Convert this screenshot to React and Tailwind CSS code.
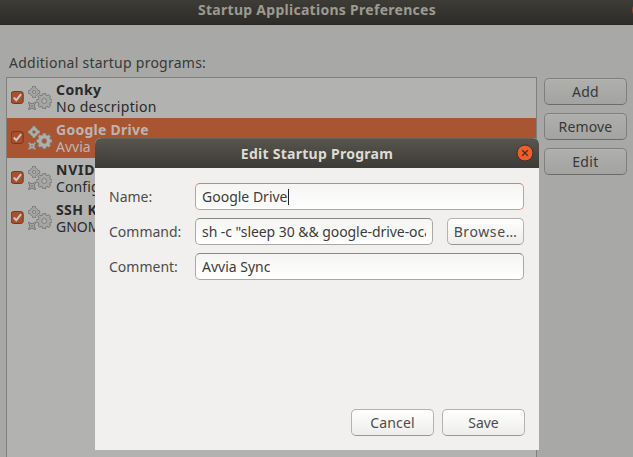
import React from "react";

const Cog = ({ cx, cy, r, hole, teeth, tooth, root = 1.3, offset = 0, light }) => {
  const angles = Array.from({ length: teeth }, (_, i) => offset + (360 / teeth) * i);
  const edge = light ? "#8b8783" : "#757574";
  const body = light ? "#aeb0ab" : "#a6a6a5";
  return (
    <g transform={`translate(${cx} ${cy})`}>
      {angles.map((a) => (
        <rect key={a} x={-tooth / 2} y={-r} width={tooth} height={r} rx=".6" fill={edge} transform={`rotate(${a})`} />
      ))}
      <circle r={r - root} fill={edge} />
      {angles.map((a) => (
        <rect key={a} x={-tooth / 2 + 0.7} y={-r + 0.7} width={tooth - 1.4} height={r - 0.7} fill={body} transform={`rotate(${a})`} />
      ))}
      <circle r={r - root - 0.8} fill={body} />
      <circle r={hole} fill={light ? "#a95531" : "#b2b2b1"} stroke={edge} strokeWidth=".8" />
    </g>
  );
};

const Gears = ({ light }) => (
  <svg width="24" height="24" viewBox="0 0 24 24" className="shrink-0">
    <Cog cx={6} cy={6} r={6.100} hole={1.600} teeth={4} tooth={3.600} root={1.400} light={light} />
    <Cog cx={4} cy={20} r={5} hole={0.800} teeth={4} tooth={2.300} root={1.900} offset={45} light={light} />
    <Cog cx={16.300} cy={15} r={8} hole={2.500} teeth={8} tooth={3.600} light={light} />
  </svg>
);

const Check = () => (
  <svg width="13" height="13" viewBox="0 0 13 13" className="-mt-0.5 shrink-0">
    <rect x=".2" y=".5" width="12" height="12" rx="2.500" fill="#a94f2c" stroke="#813516" />
    <path d="M2.800 6.500l2.500 2.700 4.800-6" fill="none" stroke="#c9c5c2" strokeWidth="2" />
  </svg>
);

const Row = ({ title, sub, selected, titleClass = "", subClass = "" }) => (
  <div className={"flex h-10 items-center pl-1 " + (selected ? "bg-[#a95531] text-[#bbb5b0]" : "text-[#292a29]")}>
    <Check />
    <div className="ml-1 flex"><Gears light={selected} /></div>
    <div className="ml-1 whitespace-nowrap leading-[17px]">
      <div className={"font-bold " + titleClass}>{title}</div>
      <div className={subClass}>{sub}</div>
    </div>
  </div>
);

const SideButton = ({ children, className = "" }) => (
  <button className="flex h-[27px] w-[83px] items-center justify-center rounded-[5px] border border-[#7f7f7d] border-b-[#6b6b69] bg-linear-to-b from-[#afafad] to-[#a3a3a1] text-[#373837] shadow-[inset_0_1px_0_#b4b4b2]">
    <span className={className}>{children}</span>
  </button>
);

const Button = ({ children, width, className = "" }) => (
  <button className={"flex h-[27px] shrink-0 items-center justify-center rounded-[5px] border border-[#b3b2af] border-b-[#979694] bg-linear-to-b from-white to-[#eeedeb] text-[#4c4c4c] " + width}>
    <span className={"whitespace-nowrap " + className}>{children}</span>
  </button>
);

const Field = ({ children, focus, className = "" }) => (
  <div className={"flex h-[27px] min-w-0 flex-1 items-center rounded-[5px] border bg-linear-to-b from-[#f5f5f4] to-white px-1.5 text-[#3c3c3c] " + (focus ? "border-[#ec9270] border-t-[#e07e55]" : "border-[#aaa9a6] border-t-[#888784]")}>
    <div className="flex min-w-0 items-center overflow-hidden whitespace-nowrap">
      <span className={className}>{children}</span>
      {focus && <span className="h-4 w-px shrink-0 bg-[#222]" />}
    </div>
  </div>
);

export default function App() {
  return (
    <div className="relative h-[457px] w-[633px] overflow-hidden bg-[#a8a8a6] font-['Noto_Sans',sans-serif] text-[14px] leading-[18px]">
      <header className="flex h-[25px] items-center justify-center overflow-hidden border-b border-[#272724] bg-linear-to-b from-[#3d3c37] to-[#2d2c29] pb-[5px] pl-px font-bold text-[#9d9a90]">
        <span className="whitespace-nowrap tracking-[0.28px]">Startup Applications Preferences</span>
      </header>
      <div className="absolute top-[2px] left-[632px] size-4 rounded-full bg-[#943f20]" />
      <main className="pl-1.5">
        <div className="flex h-[52px] items-end pb-[5px] pl-[3px] text-[#373837]">
          <span className="tracking-[0.25px]">Additional startup programs:</span>
        </div>
        <div className="flex gap-[7px]">
          <div className="h-[390px] w-[531px] border border-[#7f7f7d] bg-[#b2b2b1]">
            <Row title="Conky" sub="No description" titleClass="tracking-[0.4px]" subClass="tracking-[0.3px]" />
            <Row title="Google Drive" sub="Avvia Sync" selected titleClass="tracking-[0.27px]" />
            <Row title="NVIDIA X Server Settings" sub="Configure NVIDIA X Server Settings" titleClass="tracking-[0.8px]" subClass="tracking-[0.1px]" />
            <Row title="SSH Key Agent" sub="GNOME Keyring: SSH Agent" titleClass="tracking-[0.4px]" />
          </div>
          <div className="flex flex-col gap-2 pt-px">
            <SideButton className="tracking-[0.3px]">Add</SideButton>
            <SideButton className="tracking-[0.15px]">Remove</SideButton>
            <SideButton className="tracking-[0.4px]">Edit</SideButton>
          </div>
        </div>
      </main>
      <section className="absolute top-[138px] left-[95px] flex h-[312px] w-[444px] flex-col overflow-hidden rounded-t-[6px] bg-[#f1f0ee]">
        <div className="relative flex h-[30px] shrink-0 items-center justify-center border-t border-[#66645a] bg-linear-to-b from-[#57554c] to-[#3c3b37] font-bold text-[#dfdbd2]">
          <span className="tracking-[0.27px]">Edit Startup Program</span>
          <svg width="18" height="18" viewBox="0 0 18 18" className="absolute top-[5px] right-[5px]">
            <circle cx="9" cy="9" r="8" fill="#ee5d2c" stroke="#35342f" />
            <path d="M6.200 6.200l5.600 5.600M11.800 6.200l-5.600 5.600" stroke="#433126" strokeWidth="1.300" />
          </svg>
        </div>
        <div className="flex flex-col gap-2 pt-[15px] pr-[15px] pl-[14px] text-[#4c4c4c]">
          <div className="flex items-center">
            <div className="w-[86px]"><span>Name:</span></div>
            <Field focus>Google Drive</Field>
          </div>
          <div className="flex items-center">
            <div className="w-[86px]"><span>Command:</span></div>
            <Field className="tracking-[-0.06px]">sh -c "sleep 30 &amp;&amp; google-drive-ocamlfuse"</Field>
            <div className="ml-[14px]"><Button width="w-[77px]" className="tracking-[0.6px]">Browse…</Button></div>
          </div>
          <div className="flex items-center">
            <div className="w-[86px]"><span>Comment:</span></div>
            <Field>Avvia Sync</Field>
          </div>
        </div>
        <div className="mt-auto flex justify-end gap-2 pr-[14px] pb-[14px]">
          <Button width="w-[83px]" className="tracking-[0.15px]">Cancel</Button>
          <Button width="w-[83px]">Save</Button>
        </div>
      </section>
    </div>
  );
}
